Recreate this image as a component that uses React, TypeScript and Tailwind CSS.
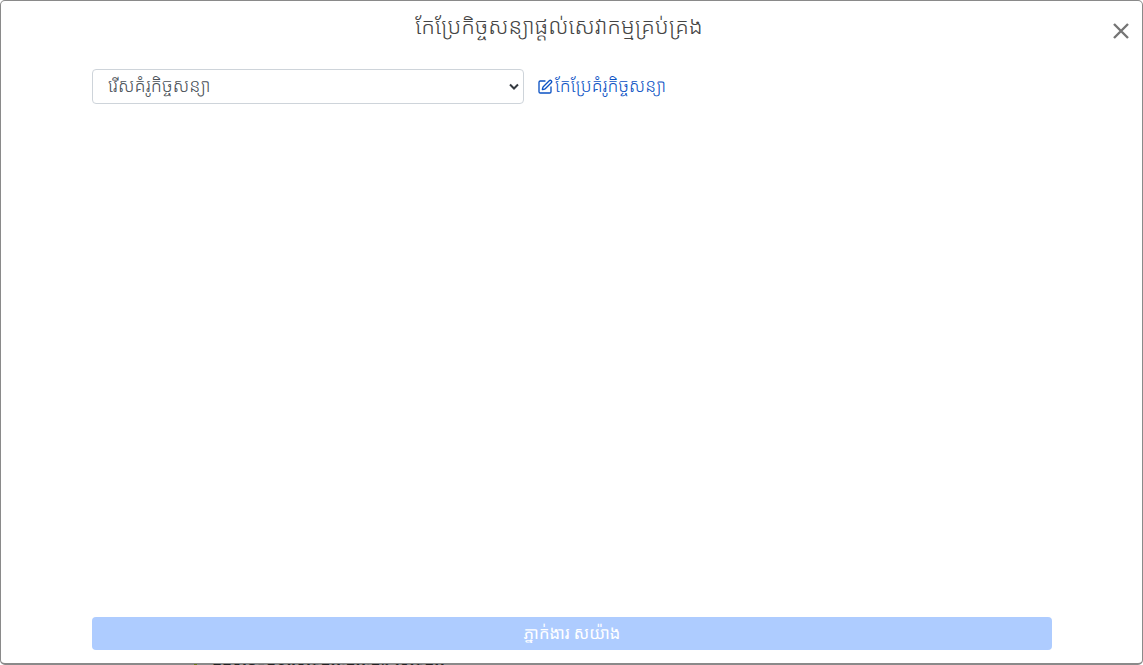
import React from "react";
import { SquarePen } from "lucide-react";

const font = "font-['Noto_Sans_Khmer','Noto_Sans','Liberation_Sans','DejaVu_Sans',sans-serif]";

export default function App() {
  return (
    <div className={`relative h-[665px] w-[1143px] overflow-hidden bg-white ${font}`}>
      <div className="flex h-[665px] flex-col rounded-[5px] border border-b-2 border-[#8a8a8a] bg-white">
        <div className="relative flex h-[68px] shrink-0 justify-center pt-[10px] pr-[25px]">
          <h1 className="text-[22.3px] leading-[30px] font-light text-[#444]">កែប្រែកិច្ចសន្យាផ្តល់សេវាកម្មគ្រប់គ្រង</h1>
          <button className="absolute top-[22px] right-[13px] text-[#757575]">
            <svg width="16" height="16" viewBox="0 0 16 16" fill="none" stroke="currentColor" strokeWidth="2.4">
              <path d="M1 1L15 15M15 1L1 15" />
            </svg>
          </button>
        </div>
        <div className="flex items-center pl-[91px]">
          <div className="relative h-[35px] w-[432px] rounded-[4px] border border-[#ced4da] bg-white pl-[15px] text-[18.2px] leading-[31px] font-light text-[#495057]">
            រើសគំរូកិច្ចសន្យា
            <svg className="absolute top-[13px] right-[3px]" width="12" height="8" viewBox="0 0 12 8" fill="none" stroke="#343a40" strokeWidth="2">
              <path d="M2 1.5L6 5.5L10 1.5" />
            </svg>
          </div>
          <a className="ml-[13px] flex items-center gap-[2px] text-[17.8px] leading-[32px] font-light text-[#0b52c4]">
            <SquarePen size={16} className="shrink-0" />
            <span className="pb-[3px]">កែប្រែគំរូកិច្ចសន្យា</span>
          </a>
        </div>
        <div className="flex-1" />
        <div className="pr-[90px] pb-[13px] pl-[91px]">
          <button className="h-[33px] w-full rounded-[4px] bg-[#aeccff] text-[16.6px] text-white">ភ្នាក់ងារ សយ៉ាង</button>
        </div>
      </div>
      <div className="absolute top-[664px] left-[194px] h-px w-[3px] bg-[#6b7a1a]" />
      <div className="absolute top-[664px] left-[212px] h-px overflow-hidden">
        <div className="-mt-[6px] text-[16px] leading-[20px] whitespace-nowrap text-[#222]">កិច្ចសន្យាផ្តល់សេវាកម្មគ្រប់គ្រង សេវាកម្ម</div>
      </div>
    </div>
  );
}
